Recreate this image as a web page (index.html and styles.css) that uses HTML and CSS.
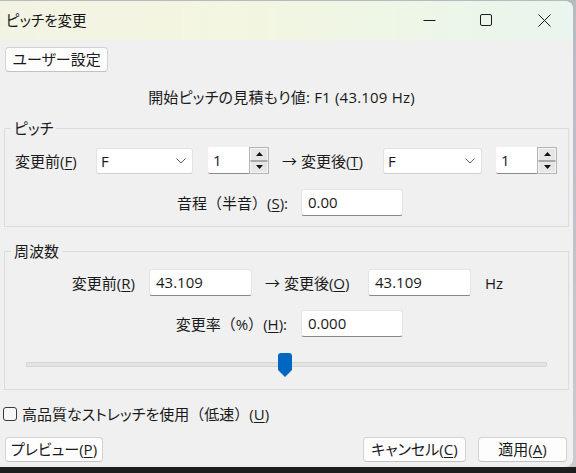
FILE: index.html
```html
<!DOCTYPE html>
<html lang="ja">
<head>
<meta charset="utf-8">
<title>ピッチを変更</title>
<link rel="stylesheet" href="styles.css">
</head>
<body>
<div class="window">
  <div class="titlebar">
    <span class="title">ピッチを変更</span>
    <div class="caption">
      <div class="cbtn"><svg width="13" height="13" viewBox="0 0 13 13"><path d="M0.5 6.5H12.5" stroke="#1a1a1a" stroke-width="1"/></svg></div>
      <div class="cbtn"><svg width="13" height="13" viewBox="0 0 13 13"><rect x="0.5" y="0.5" width="11" height="11" rx="1.5" fill="none" stroke="#1a1a1a" stroke-width="1"/></svg></div>
      <div class="cbtn"><svg width="13" height="13" viewBox="0 0 13 13"><path d="M0.5 0.5L12.5 12.5M12.5 0.5L0.5 12.5" stroke="#1a1a1a" stroke-width="1"/></svg></div>
    </div>
  </div>
  <div class="client">
    <div class="toprow"><button class="btn btn-user">ユーザー設定</button></div>
    <div class="estimate">開始ピッチの見積もり値: F1 (43.109 Hz)</div>

    <fieldset class="group group-pitch">
      <legend>ピッチ</legend>
      <div class="row">
        <span class="lbl lbl-from">変更前(<u>F</u>)</span>
        <div class="combo combo-a"><span>F</span><svg width="10" height="6" viewBox="0 0 10 6"><path d="M0.5 0.5L5 5L9.5 0.5" fill="none" stroke="#606060" stroke-width="1"/></svg></div>
        <div class="spin">
          <div class="spin-input">1</div>
          <div class="spin-btns">
            <div class="sb"><svg width="7" height="4" viewBox="0 0 7 4"><path d="M0 4L3.5 0L7 4Z" fill="#111"/></svg></div>
            <div class="sb"><svg width="7" height="4" viewBox="0 0 7 4"><path d="M0 0L3.5 4L7 0Z" fill="#111"/></svg></div>
          </div>
        </div>
        <span class="lbl lbl-to">→ 変更後(<u>T</u>)</span>
        <div class="combo combo-b"><span>F</span><svg width="10" height="6" viewBox="0 0 10 6"><path d="M0.5 0.5L5 5L9.5 0.5" fill="none" stroke="#606060" stroke-width="1"/></svg></div>
        <div class="spin spin-b">
          <div class="spin-input">1</div>
          <div class="spin-btns">
            <div class="sb"><svg width="7" height="4" viewBox="0 0 7 4"><path d="M0 4L3.5 0L7 4Z" fill="#111"/></svg></div>
            <div class="sb"><svg width="7" height="4" viewBox="0 0 7 4"><path d="M0 0L3.5 4L7 0Z" fill="#111"/></svg></div>
          </div>
        </div>
      </div>
      <div class="row row2">
        <span class="lbl lbl-wide">音程<span class="fw">（半音）</span>(<u>S</u>):</span>
        <div class="field field-s">0.00</div>
      </div>
    </fieldset>

    <fieldset class="group group-freq">
      <legend>周波数</legend>
      <div class="row">
        <span class="lbl lbl-rfrom">変更前(<u>R</u>)</span>
        <div class="field field-f">43.109</div>
        <span class="lbl lbl-rto">→ 変更後(<u>O</u>)</span>
        <div class="field field-f">43.109</div>
        <span class="lbl lbl-hz">Hz</span>
      </div>
      <div class="row row2b">
        <span class="lbl lbl-wide2">変更率<span class="fw">（%）</span>(<u>H</u>):</span>
        <div class="field field-s">0.000</div>
      </div>
      <div class="slider">
        <div class="track">
          <svg class="thumb" width="14" height="24" viewBox="0 0 14 24"><path d="M3 0H11Q14 0 14 3V17L7 24L0 17V3Q0 0 3 0Z" fill="#0067c0"/></svg>
        </div>
      </div>
    </fieldset>

    <label class="check"><span class="box"></span><span>高品質なストレッチを使用<span class="fw">（低速）</span>(<u>U</u>)</span></label>

    <div class="buttons">
      <button class="btn btn-preview">プレビュー(<u>P</u>)</button>
      <div class="spacer"></div>
      <button class="btn btn-cancel">キャンセル(<u>C</u>)</button>
      <button class="btn btn-apply">適用(<u>A</u>)</button>
    </div>
  </div>
</div>
</body>
</html>
```

FILE: styles.css
```css
* { box-sizing: border-box; }
html, body { margin: 0; padding: 0; }
body {
  width: 576px;
  height: 473px;
  overflow: hidden;
  background: linear-gradient(to bottom, #b7bbbf 0, #c9cccf 467px, #1e1e1e 467px);
  font-family: "Open Sans", "Noto Sans CJK JP", sans-serif;
  font-size: 15px;
  line-height: 20px;
  color: #1a1a1a;
  font-feature-settings: "palt";
}
.fw { font-feature-settings: normal; }
u { text-decoration: underline; text-underline-offset: 2px; text-decoration-thickness: 1px; }

.window {
  margin-top: 1px;
  width: 573px;
  border-radius: 0 8px 8px 0;
  overflow: hidden;
  background: #f0f0f0;
}
.titlebar {
  height: 39px;
  display: flex;
  align-items: center;
  background: linear-gradient(90deg, #f3f3e4 0%, #f3f6e0 40%, #edf6e7 72%, #e9f5ee 100%);
}
.title {
  margin-left: 6px;
  font-size: 14.5px;
  color: #111;
  flex: 1;
}
.caption { display: flex; height: 39px; }
.cbtn {
  width: 57.5px;
  height: 39px;
  display: flex;
  align-items: center;
  justify-content: center;
}

.client {
  padding: 0 4px 5px 4px;
}
.toprow { padding-top: 7px; padding-left: 1px; }
.btn {
  font: inherit;
  font-feature-settings: "palt";
  color: #1a1a1a;
  height: 25px;
  background: #fdfdfd;
  border: 1px solid #d3d3d3;
  border-bottom-color: #c2c2c2;
  border-radius: 4px;
  padding: 0;
  line-height: 21px;
}
.btn-user { width: 103px; }
.estimate {
  margin-top: 15px;
  text-align: center;
  padding-right: 10px;
  letter-spacing: 0.2px;
}

.group {
  margin: 0;
  padding: 0;
  width: 565px;
  border: 1px solid #dcdcdc;
}
.group legend {
  margin-left: 6px;
  padding: 0 3px;
  line-height: 20px;
  height: 20px;
}
.group-pitch { margin-top: 11px; padding-top: 9px; padding-bottom: 10px; }
.group-freq { margin-top: 14px; padding-top: 8px; padding-bottom: 10px; }

.row {
  display: flex;
  align-items: center;
  height: 27px;
}
.row2 { margin-top: 15px; }
.row2b { margin-top: 14px; }
.lbl { white-space: nowrap; flex: none; }
.lbl-from { width: 91px; padding-left: 10px; }
.lbl-to { width: 114px; padding-left: 13px; }
.lbl-wide { width: 296px; text-align: right; padding-right: 13px; }
.lbl-wide2 { width: 296px; text-align: right; padding-right: 14px; }
.lbl-rfrom { width: 144px; text-align: right; padding-right: 14px; }
.lbl-rto { width: 116px; padding-left: 13px; }
.lbl-hz { margin-left: 14px; }

.combo {
  flex: none;
  height: 26px;
  background: #ffffff;
  border: 1px solid #e3e3e3;
  border-bottom-color: #cfcfcf;
  border-radius: 3px;
  display: flex;
  align-items: center;
  justify-content: space-between;
  padding: 0 6px 0 4px;
}
.combo-a { width: 97px; }
.combo-b { width: 99px; }

.spin {
  flex: none;
  display: flex;
  margin-left: 15px;
  height: 27px;
}
.spin-b { margin-left: 14px; }
.spin-input {
  width: 41px;
  height: 27px;
  background: #ffffff;
  border-bottom: 1px solid #8a8a8a;
  border-radius: 2px 0 0 2px;
  padding-left: 5px;
  line-height: 26px;
}
.spin-btns {
  width: 20px;
  display: flex;
  flex-direction: column;
  border: 1px solid #b5b5b5;
  background: #e6e6e6;
}
.sb {
  flex: 1;
  display: flex;
  align-items: center;
  justify-content: center;
  border: 1px solid #f4f4f4;
  border-bottom-color: #a9a9a9;
}
.sb + .sb { border-bottom-color: #f4f4f4; border-top-color: #a9a9a9; }

.field {
  flex: none;
  height: 27px;
  background: #ffffff;
  border: 1px solid #e5e5e5;
  border-bottom: 1px solid #878787;
  border-radius: 3px;
  padding-left: 6px;
  line-height: 24px;
}
.field-s { width: 102px; }
.field-f { width: 103px; }

.slider {
  margin-top: 12px;
  height: 30px;
  display: flex;
  align-items: center;
}
.track {
  position: relative;
  margin-left: 21px;
  width: 521px;
  height: 5px;
  background: #e4e4e4;
  border: 1px solid #d6d6d6;
  border-radius: 1px;
}
.thumb {
  position: absolute;
  left: 251px;
  top: -10px;
}

.check {
  margin-top: 14px;
  height: 20px;
  display: flex;
  align-items: center;
  margin-left: -1px;
}
.box {
  width: 14px;
  height: 14px;
  border: 1px solid #3a3a3a;
  border-radius: 3px;
  background: #f7f7f7;
  margin-right: 5px;
}

.buttons {
  margin-top: 13px;
  display: flex;
  padding-left: 1px;
}
.spacer { flex: 1; }
.btn-preview { width: 98px; }
.btn-cancel { width: 103px; }
.btn-apply { width: 89px; margin-left: 12px; margin-right: 2px; }
```
